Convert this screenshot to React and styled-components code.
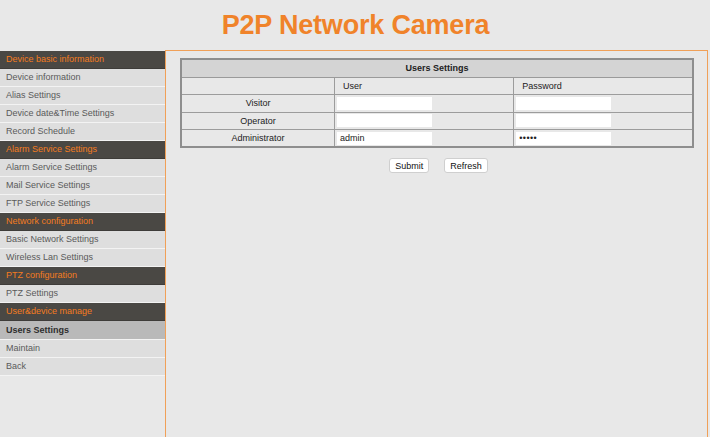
import React from 'react';
import styled, { createGlobalStyle } from 'styled-components';

const GlobalStyle = createGlobalStyle`
    html, body {
        margin: 0;
        padding: 0;
        background: #e8e8e8;
        font-family: "Liberation Sans", Arial, sans-serif;
    }
    * {
        box-sizing: border-box;
    }
`;

const menu = [
    {
        title: 'Device basic information',
        items: ['Device information', 'Alias Settings', 'Device date&Time Settings', 'Record Schedule'],
    },
    {
        title: 'Alarm Service Settings',
        items: ['Alarm Service Settings', 'Mail Service Settings', 'FTP Service Settings'],
    },
    {
        title: 'Network configuration',
        items: ['Basic Network Settings', 'Wireless Lan Settings'],
    },
    {
        title: 'PTZ configuration',
        items: ['PTZ Settings'],
    },
    {
        title: 'User&device manage',
        items: ['Users Settings', 'Maintain', 'Back'],
    },
];

const users = [
    { role: 'Visitor', user: '', password: '' },
    { role: 'Operator', user: '', password: '' },
    { role: 'Administrator', user: 'admin', password: '•••••' },
];

function App() {
    const active = 'Users Settings';

    return (
        <Page>
            <GlobalStyle />
            <Header>
                <h1>P2P Network Camera</h1>
            </Header>
            <Body>
                <Sidebar>
                    {menu.map(group => (
                        <React.Fragment key={group.title}>
                            <GroupTitle>{group.title}</GroupTitle>
                            {group.items.map(item => (
                                <MenuItem key={item} $active={item === active}>{item}</MenuItem>
                            ))}
                        </React.Fragment>
                    ))}
                </Sidebar>
                <Content>
                    <SettingsTable>
                        <colgroup>
                            <col style={{ width: '30%' }} />
                            <col style={{ width: '35%' }} />
                            <col style={{ width: '35%' }} />
                        </colgroup>
                        <thead>
                            <tr>
                                <th colSpan={3}>Users Settings</th>
                            </tr>
                        </thead>
                        <tbody>
                            <tr>
                                <td></td>
                                <td className="col-title">User</td>
                                <td className="col-title">Password</td>
                            </tr>
                            {users.map(u => (
                                <tr key={u.role}>
                                    <td className="role">{u.role}</td>
                                    <td><Field>{u.user}</Field></td>
                                    <td><Field $dots={!!u.password}>{u.password}</Field></td>
                                </tr>
                            ))}
                        </tbody>
                    </SettingsTable>
                    <Actions>
                        <Button>Submit</Button>
                        <Button>Refresh</Button>
                    </Actions>
                </Content>
            </Body>
        </Page>
    );
}

export default App;

const Page = styled.div`
    width: 710px;
    height: 437px;
    display: flex;
    flex-direction: column;
    overflow: hidden;
`;

const Header = styled.div`
    height: 50px;
    display: flex;
    align-items: center;
    justify-content: center;

    h1 {
        margin: 0;
        color: #f0832a;
        font-size: 27px;
        font-weight: bold;
        letter-spacing: -0.2px;
        padding-left: 1px;
    }
`;

const Body = styled.div`
    flex: 1;
    display: flex;
`;

const Sidebar = styled.div`
    width: 165px;
    flex-shrink: 0;
    padding-top: 1px;
    display: flex;
    flex-direction: column;
`;

const GroupTitle = styled.div`
    height: 18px;
    line-height: 17px;
    border-bottom: 1px solid #3e3c39;
    background: #4a4844;
    color: #f47c1f;
    font-size: 9px;
    padding-left: 6px;
`;

const MenuItem = styled.div`
    height: ${p => (p.$active ? '19px' : '18px')};
    line-height: ${p => (p.$active ? '18px' : '17px')};
    border-bottom: 1px solid #f3f3f3;
    background: ${p => (p.$active ? '#b9b9b9' : '#dedede')};
    color: ${p => (p.$active ? '#2e2e2e' : '#5a5a5a')};
    font-weight: ${p => (p.$active ? 'bold' : 'normal')};
    font-size: 9px;
    padding-left: 6px;
`;

const Content = styled.div`
    width: 543px;
    flex-shrink: 0;
    border: 1px solid #f0a058;
    border-bottom: none;
    padding: 7px 13px 0 14px;
    display: flex;
    flex-direction: column;
    align-items: center;
`;

const SettingsTable = styled.table`
    width: 514px;
    border-collapse: collapse;
    border: 2px solid #8e8e8e;
    font-size: 9px;
    color: #222;
    table-layout: fixed;

    th {
        height: 18px;
        padding: 0;
        background: #d4d4d4;
        border: 1px solid #9a9a9a;
        font-weight: bold;
        text-align: center;
    }

    td {
        height: 17.5px;
        padding: 0 2px;
        border: 1px solid #9c9c9c;
        vertical-align: middle;
    }

    td.col-title {
        padding-left: 8px;
    }

    td.role {
        text-align: center;
    }
`;

const Field = styled.div`
    width: 95px;
    height: 13px;
    line-height: 13px;
    background: #fff;
    padding-left: 3px;
    font-size: 9px;
    letter-spacing: ${p => (p.$dots ? '0.4px' : '0')};
`;

const Actions = styled.div`
    display: flex;
    gap: 15px;
    margin-top: 10px;
    padding-left: 3px;
`;

const Button = styled.button`
    height: 15px;
    padding: 0 5px;
    border: 1px solid #cfcfcf;
    border-radius: 3px;
    background: #fff;
    font-family: "Liberation Sans", Arial, sans-serif;
    font-size: 9px;
    color: #111;
    line-height: 12px;
`;
